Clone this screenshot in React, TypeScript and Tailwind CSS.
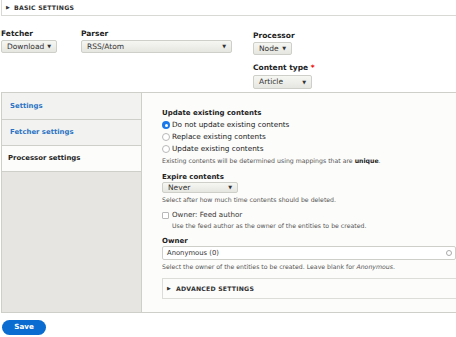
import React from "react";

const font = { fontFamily: '"DejaVu Sans", "Liberation Sans", sans-serif' };

function Select({ value, w, h = "h-[13px]" }: { value: string; w: string; h?: string }) {
  return (
    <div
      className={`${w} ${h} flex items-center justify-between rounded-[2px] border border-[#cfcfc9] bg-gradient-to-b from-[#f6f6f3] to-[#e6e6e1] pl-[5px] pr-[5px] text-[7.5px] text-[#333]`}
    >
      <span>{value}</span>
      <span className="text-[5px] leading-none text-[#333]">▼</span>
    </div>
  );
}

function Radio({ checked, label }: { checked?: boolean; label: string }) {
  return (
    <div className="flex h-[12px] items-center gap-[2px] text-[7.3px] text-[#222]">
      {checked ? (
        <span className="flex h-[8px] w-[8px] items-center justify-center rounded-full bg-[#1a78ea]">
          <span className="h-[3px] w-[3px] rounded-full bg-white" />
        </span>
      ) : (
        <span className="h-[8px] w-[8px] rounded-full border border-[#b8b8b8] bg-white" />
      )}
      <span>{label}</span>
    </div>
  );
}

export default function App() {
  return (
    <div className="relative h-[337px] w-[456px] overflow-hidden bg-white" style={font}>
      {/* Basic settings details */}
      <div className="ml-px flex h-[16px] w-[520px] items-center border-b border-l border-[#d8d8d4] pl-[4px] text-[6.2px] font-bold tracking-[0.2px] text-[#333]">
        <span className="mr-[4px] text-[5px]">▶</span>
        BASIC SETTINGS
      </div>

      {/* Selectors */}
      <div className="ml-px mt-[13px] flex">
        <div className="w-[80px]">
          <div className="h-[10px] text-[7.5px] font-bold leading-[10px] text-[#222]">Fetcher</div>
          <div className="mt-[1px]">
            <Select value="Download" w="w-[56px]" />
          </div>
        </div>
        <div className="w-[172px]">
          <div className="h-[10px] text-[7.5px] font-bold leading-[10px] text-[#222]">Parser</div>
          <div className="mt-[1px]">
            <Select value="RSS/Atom" w="w-[151px]" />
          </div>
        </div>
        <div className="mt-[2px]">
          <div className="h-[10px] text-[7.5px] font-bold leading-[10px] text-[#222]">Processor</div>
          <div className="mt-[1px]">
            <Select value="Node" w="w-[39px]" />
          </div>
          <div className="mt-[8px] h-[10px] text-[7.5px] font-bold leading-[10px] text-[#222]">
            Content type <span className="text-[#e00]">*</span>
          </div>
          <div className="mt-[2px]">
            <Select value="Article" w="w-[59px]" h="h-[14px]" />
          </div>
        </div>
      </div>

      {/* Vertical tabs */}
      <div className="ml-px mt-[3px] flex h-[221px] w-[520px] border border-[#cfcfca] bg-[#e6e5e1]">
        <div className="w-[139px] shrink-0">
          <div className="flex h-[27px] items-center border-b border-[#cfcfca] bg-[#f2f2f0] pl-[8px] text-[6.9px] font-bold text-[#2a72c4]">
            Settings
          </div>
          <div className="flex h-[26px] items-center border-b border-[#cfcfca] bg-[#f2f2f0] pl-[8px] text-[6.9px] font-bold text-[#2a72c4]">
            Fetcher settings
          </div>
          <div className="flex h-[26px] items-center border-b border-[#cfcfca] bg-[#fcfcfa] pl-[6px] text-[6.9px] font-bold text-[#222]">
            Processor settings
          </div>
        </div>
        <div className="flex-1 border-l border-[#cfcfca] bg-[#fcfcfa] pl-[20px] pt-[15px]">
          <div className="h-[11px] text-[7px] font-bold leading-[11px] text-[#222]">Update existing contents</div>
          <Radio checked label="Do not update existing contents" />
          <Radio label="Replace existing contents" />
          <Radio label="Update existing contents" />
          <div className="mt-[1px] text-[6.2px] leading-[10px] text-[#555]">
            Existing contents will be determined using mappings that are <span className="font-bold text-[#222]">unique</span>.
          </div>

          <div className="mt-[6px] h-[10px] text-[7px] font-bold leading-[10px] text-[#222]">Expire contents</div>
          <div>
            <Select value="Never" w="w-[76px]" h="h-[11px]" />
          </div>
          <div className="mt-[2px] text-[6.2px] leading-[10px] text-[#555]">
            Select after how much time contents should be deleted.
          </div>

          <div className="mt-[4px] flex h-[12px] items-center gap-[3px] text-[7.1px] text-[#333]">
            <span className="h-[7px] w-[7px] rounded-[1px] border border-[#b8b8b8] bg-white" />
            <span>Owner: Feed author</span>
          </div>
          <div className="pl-[10px] text-[6.2px] leading-[10px] text-[#555]">
            Use the feed author as the owner of the entities to be created.
          </div>

          <div className="mt-[5px] h-[10px] text-[7px] font-bold leading-[10px] text-[#222]">Owner</div>
          <div className="flex h-[14px] w-[294px] items-center justify-between rounded-[2px] border border-[#cfcfca] bg-white pl-[4px] pr-[3px] text-[6.8px] text-[#333]">
            <span>Anonymous (0)</span>
            <span className="h-[6px] w-[6px] rounded-full border border-[#aaa]" />
          </div>
          <div className="mt-[2px] text-[6.2px] leading-[10px] text-[#555]">
            Select the owner of the entities to be created. Leave blank for <i>Anonymous</i>.
          </div>

          <div className="mt-[6px] flex h-[21px] w-[340px] items-center border border-[#dcdcd8] bg-[#fcfcfa] pl-[4px] text-[6.2px] font-bold tracking-[0.2px] text-[#333]">
            <span className="mr-[5px] text-[5px]">▶</span>
            ADVANCED SETTINGS
          </div>
        </div>
      </div>

      {/* Save */}
      <div className="ml-[2px] mt-[7px] flex h-[15px] w-[44px] items-center justify-center rounded-full bg-[#0a6cd0] text-[7.2px] font-bold text-white">
        Save
      </div>
    </div>
  );
}
